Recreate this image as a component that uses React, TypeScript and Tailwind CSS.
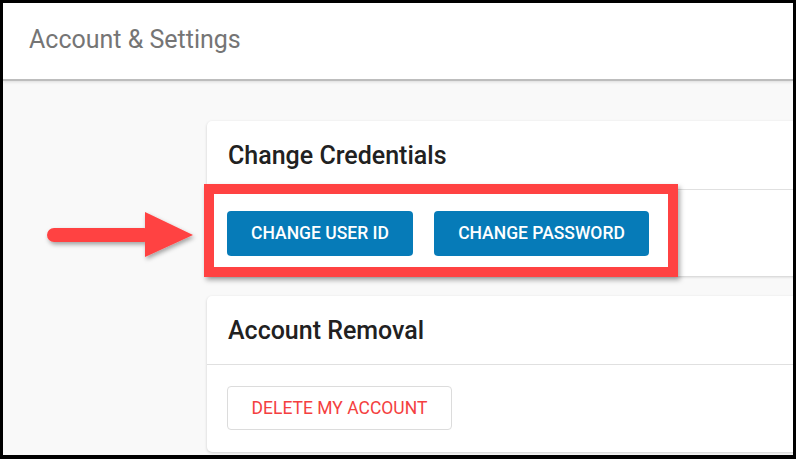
import React from "react";

export default function App() {
  return (
    <div
      className="w-[796px] h-[459px] bg-black pt-[3px] pl-[3px] pr-[3px] pb-[4px] overflow-hidden"
      style={{ fontFamily: "Roboto, 'Liberation Sans', sans-serif" }}
    >
      <div className="relative w-full h-full bg-[#f9f9f9] overflow-hidden">
        <header className="h-[78px] bg-white border-b-2 border-[#bdbdbd] shadow-[0_1px_3px_rgba(0,0,0,0.12)] flex items-center pl-[26px]">
          <h1 className="text-[25px] text-[#757575] font-normal leading-none -mt-[3px]">
            Account &amp; Settings
          </h1>
        </header>

        <main className="pt-[40px] pl-[204px] flex flex-col gap-[20px]">
          <section className="w-[700px] bg-white rounded-[5px] shadow-[0_1px_3px_rgba(0,0,0,0.18)]">
            <div className="h-[69px] flex items-center pl-[21px] border-b border-[#e0e0e0]">
              <h2 className="text-[25px] font-medium text-[#212121] leading-none">Change Credentials</h2>
            </div>
            <div className="pt-[21px] pb-[20px] pl-[20px] flex gap-[21px]">
              <button className="w-[186px] h-[45px] rounded-[4px] bg-[#067bb8] text-white text-[17.5px] font-medium uppercase">
                Change User ID
              </button>
              <button className="w-[215px] h-[45px] rounded-[4px] bg-[#067bb8] text-white text-[17.5px] font-medium uppercase">
                Change Password
              </button>
            </div>
          </section>

          <section className="w-[700px] bg-white rounded-[5px] shadow-[0_1px_3px_rgba(0,0,0,0.18)]">
            <div className="h-[69px] flex items-center pl-[21px] border-b border-[#e0e0e0]">
              <h2 className="text-[25px] font-medium text-[#212121] leading-none">Account Removal</h2>
            </div>
            <div className="pt-[21px] pb-[22px] pl-[20px] flex">
              <button className="w-[225px] h-[44px] rounded-[4px] bg-white border border-[#dcdcdc] text-[#f44040] text-[17.5px] font-normal uppercase">
                Delete My Account
              </button>
            </div>
          </section>
        </main>

        {/* annotation: red box */}
        <div className="absolute left-[201px] top-[181px] w-[474px] h-[93px] border-[10px] border-[#ff4242] shadow-[2px_3px_5px_rgba(0,0,0,0.35)]" />

        {/* annotation: arrow */}
        <svg
          className="absolute left-[38px] top-[200px]"
          width="160"
          height="62"
          viewBox="0 0 160 62"
        >
          <defs>
            <filter id="sh" x="-10%" y="-20%" width="130%" height="150%">
              <feDropShadow dx="1.5" dy="2.5" stdDeviation="2" floodColor="#000" floodOpacity="0.35" />
            </filter>
          </defs>
          <g filter="url(#sh)" fill="#ff4242">
            <rect x="6" y="25" width="104" height="14" rx="7" />
            <polygon points="104,9 152,32 104,54" />
          </g>
        </svg>
      </div>
    </div>
  );
}
